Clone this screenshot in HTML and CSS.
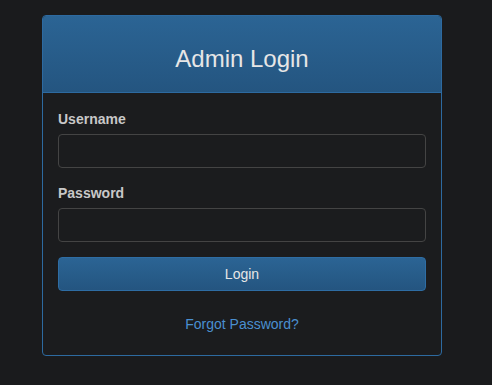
FILE: index.html
```
<!DOCTYPE html>
<html lang="en">
<head>
    <meta charset="UTF-8">
    <meta name="viewport" content="width=device-width, initial-scale=1.0">
    <title>Admin Login</title>
    <link rel="stylesheet" href="styles.css">
</head>
<body>
    <!-- login card -->
    <div class="login-panel">
        <div class="panel-heading">
            <h2>Admin Login</h2>
        </div>
        <div class="panel-body">
            <div class="form-group">
                <label for="username">Username</label>
                <input type="text" id="username">
            </div>
            <div class="form-group">
                <label for="password">Password</label>
                <input type="password" id="password">
            </div>
            <button class="login-button">Login</button>
            <div class="forgot">
                <a href="#">Forgot Password?</a>
            </div>
        </div>
    </div>
</body>
</html>
```

FILE: styles.css
```
body {
    font-family: "Liberation Sans", Arial, sans-serif;
    font-size: 14px;
    line-height: 20px;
    margin: 0;
    padding-top: 15px;
    background-color: #1a1b1d;
    color: #ccc;
}
.login-panel {
    width: 400px;
    box-sizing: border-box;
    margin-left: 42px;
    border: 1px solid #2d6aa0;
    border-radius: 4px;
    background-color: #1b1c1e;
}
.panel-heading {
    padding: 30px 15px 20px;
    text-align: center;
    background: linear-gradient(to bottom, #2b6494, #245580);
    border-bottom: 1px solid #2d6aa0;
    border-radius: 3px 3px 0 0;
}
.panel-heading h2 {
    margin: 0;
    font-size: 24px;
    font-weight: normal;
    line-height: 26px;
    color: #e6e6e6;
}
.panel-body {
    padding: 16px 15px 21px;
}
.form-group {
    margin-bottom: 15px;
}
.form-group label {
    display: block;
    margin-bottom: 5px;
    font-weight: bold;
    color: #c8c8c8;
}
.form-group input {
    display: block;
    width: 100%;
    height: 34px;
    box-sizing: border-box;
    padding: 6px 12px;
    border: 1px solid #444;
    border-radius: 4px;
    background-color: #1b1c1e;
    color: #ddd;
    font-size: 14px;
}
.login-button {
    display: block;
    width: 100%;
    height: 34px;
    border: 1px solid #2e6da4;
    border-radius: 4px;
    background: linear-gradient(to bottom, #2b6494, #245580);
    color: #e6e6e6;
    font-family: inherit;
    font-size: 14px;
    cursor: pointer;
}
.forgot {
    margin-top: 23px;
    text-align: center;
}
.forgot a {
    color: #4a8fd0;
    text-decoration: none;
}
```
